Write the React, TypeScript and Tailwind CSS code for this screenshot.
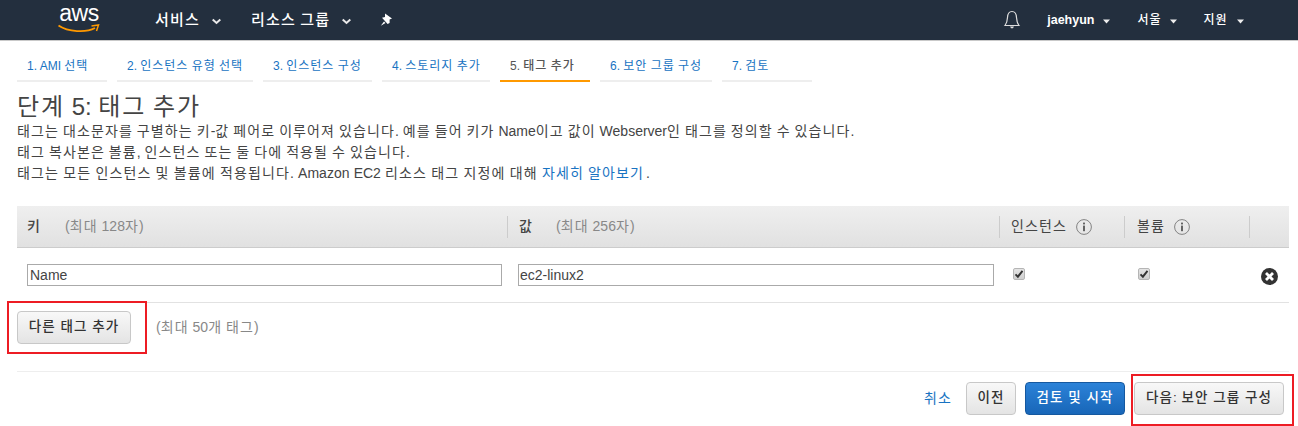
import React from "react";

const font = { fontFamily: '"Liberation Sans", "Noto Sans CJK KR", sans-serif' };

// The reference's Korean font sets every syllable on a full em; Noto's are narrower.
function T({ children }: { children: string }) {
  const runs = children.split(/([\uac00-\ud7a3]+)/);
  return (
    <span className="whitespace-pre-wrap">
      {runs.map((r, i) =>
        i % 2 === 1 ? (
          <span key={i} className="tracking-[0.08em]">
            {r}
          </span>
        ) : (
          <span key={i}>{r}</span>
        )
      )}
    </span>
  );
}

function Caret({ big = false }: { big?: boolean }) {
  if (big)
    return (
      <svg width="9" height="7" viewBox="0 0 9 7" className="ml-[12px] mt-[3px]">
        <path d="M.7 1.5 L4.5 5 L8.3 1.5" fill="none" stroke="#e8e8e8" strokeWidth="2" />
      </svg>
    );
  return (
    <svg width="7" height="5" viewBox="0 0 7 5" className="ml-[9px] mt-[2px]">
      <path d="M0 .5 H7 L3.5 4.5 Z" fill="#eee" />
    </svg>
  );
}

function Info() {
  return (
    <svg width="16" height="16" viewBox="0 0 16 16" className="ml-[9px]">
      <circle cx="8" cy="8" r="7.4" fill="none" stroke="#777" strokeWidth="0.9" />
      <rect x="7.1" y="6.6" width="1.8" height="5.6" fill="#555" />
      <rect x="7.1" y="3.6" width="1.8" height="1.8" fill="#555" />
    </svg>
  );
}

function Check() {
  return (
    <span className="mt-[-2px] flex h-[12px] w-[12px] items-center justify-center rounded-[2px] border border-[#b5b5b5] bg-gradient-to-b from-[#e4e4e4] to-[#cfcfcf]">
      <svg width="10" height="10" viewBox="0 0 10 10">
        <path d="M1.5 5.3 L3.9 7.7 L8.5 1.8" fill="none" stroke="#333" strokeWidth="1.9" />
      </svg>
    </span>
  );
}

const tabs = [
  ["1. AMI 선택", "w-[90px]"],
  ["2. 인스턴스 유형 선택", "w-[136px]"],
  ["3. 인스턴스 구성", "w-[109px]"],
  ["4. 스토리지 추가", "w-[108px]"],
  ["5. 태그 추가", "w-[90px]"],
  ["6. 보안 그룹 구성", "w-[112px]"],
  ["7. 검토", "w-[90px]"],
];

const grayBtn =
  "h-[33px] rounded-[4px] border border-[#c8c8c8] bg-gradient-to-b from-[#f8f8f8] to-[#e4e4e4] text-[13.5px] font-medium text-[#333] [word-spacing:1px]";

export default function App() {
  return (
    <div style={font} className="relative h-[426px] w-[1298px] overflow-hidden bg-white text-[14px] text-[#444]">
      <header className="flex h-[41px] items-center border-b border-[#c9c9c9] bg-[#232f3e] text-white">
        <div className="relative ml-[58px] flex h-[40px] w-[42px] flex-col items-center">
          <span className="mt-[1px] text-[23px] leading-[24px] tracking-[-0.5px] text-white">aws</span>
          <svg width="42" height="10" viewBox="0 0 42 10" className="mt-[-1px]">
            <path d="M0.5 1.5 C10 8 28 9 37 4" fill="none" stroke="#f90" strokeWidth="1.8" />
            <path d="M33.5 2 L40.5 1 L38.5 7" fill="none" stroke="#f90" strokeWidth="1.5" />
          </svg>
        </div>
        <div className="ml-[55px] flex items-center text-[15px] font-medium">
          <T>서비스</T>
          <Caret big />
        </div>
        <div className="ml-[30px] flex items-center text-[15px] font-medium">
          <T>리소스 그룹</T>
          <Caret big />
        </div>
        <svg width="13" height="14" viewBox="0 0 13 14" className="ml-[29px]">
          <path d="M5 .5 L12 5.5 L9.6 6.4 L9.6 10 L7.6 11 L2 4.8 L5 4 Z M4 8.5 L.8 12.8 L5.5 10 Z" fill="#fff" />
        </svg>
        <svg width="18" height="20" viewBox="0 0 18 20" className="ml-[610px]">
          <path
            d="M2 15.5 C4 13 4.3 11 4.5 7.5 C4.7 3.5 6.5 1.5 9 1.5 C11.5 1.5 13.3 3.5 13.5 7.5 C13.7 11 14 13 16 15.5 Z"
            fill="none"
            stroke="#ddd"
            strokeWidth="1.2"
          />
          <path d="M7 16.5 H11 L10 18.3 H8 Z" fill="#ddd" />
        </svg>
        <div className="ml-[26px] flex items-center text-[12.5px] font-bold">
          jaehyun
          <Caret />
        </div>
        <div className="ml-[27px] flex items-center text-[12px] font-medium">
          <T>서울</T>
          <Caret />
        </div>
        <div className="ml-[26px] flex items-center text-[12px] font-medium">
          <T>지원</T>
          <Caret />
        </div>
      </header>

      <main className="pl-[17px] pr-[9px]">
        <nav className="mt-[10px] flex gap-[10px]">
          {tabs.map(([t, w], i) => (
            <div
              key={t}
              className={`${w} h-[31px] whitespace-nowrap border-b-[2px] pl-[10px] pt-[7px] text-[12px] leading-[16px] ${
                i === 4 ? "border-[#f90] font-medium text-[#555]" : "border-[#eee] text-[#1873c2]"
              }`}
            >
              <T>{t}</T>
            </div>
          ))}
        </nav>

        <h1 className="mt-[11px] text-[24px] font-normal leading-[28px] text-[#444]">
          <T>단계 5: 태그 추가</T>
        </h1>
        <div className="text-[14px] leading-[21px]">
          <p>
            <T>태그는 대소문자를 구별하는 키-값 페어로 이루어져 있습니다. 예를 들어 키가 Name이고 값이 Webserver인 태그를 정의할 수 있습니다.</T>
          </p>
          <p>
            <T>태그 복사본은 볼륨, 인스턴스 또는 둘 다에 적용될 수 있습니다.</T>
          </p>
          <p className="[word-spacing:0.3px]">
            <T>태그는 모든 인스턴스 및 볼륨에 적용됩니다. Amazon EC2 리소스 태그 지정에 대해 </T>
            <span className="text-[#1873c2]">
              <T>자세히 알아보기</T>
            </span>
            <span className="ml-[2px]">.</span>
          </p>
        </div>

        <div className="mt-[22px] flex h-[42px] items-center border-b border-[#ccc] bg-gradient-to-b from-[#efefef] to-[#e1e1e1]">
          <div className="flex h-[22px] w-[491px] items-center border-r border-[#ccc] pl-[10px]">
            <b className="w-[38px] font-medium">
              <T>키</T>
            </b>
            <span className="text-[#888]">
              <T>(최대 128자)</T>
            </span>
          </div>
          <div className="flex h-[22px] w-[492px] items-center border-r border-[#ccc] pl-[11px]">
            <b className="w-[37px] font-medium">
              <T>값</T>
            </b>
            <span className="text-[#888]">
              <T>(최대 256자)</T>
            </span>
          </div>
          <div className="flex h-[22px] w-[125px] items-center border-r border-[#ccc] pl-[11px]">
            <T>인스턴스</T>
            <Info />
          </div>
          <div className="flex h-[22px] w-[125px] items-center border-r border-[#ccc] pl-[12px]">
            <T>볼륨</T>
            <Info />
          </div>
        </div>

        <div className="flex h-[55px] items-center border-b border-[#e2e2e2]">
          <div className="w-[491px] pl-[10px]">
            <div className="flex h-[22px] w-[475px] items-center border border-[#aaa] pl-[2px] text-[14px] text-[#444]">Name</div>
          </div>
          <div className="w-[492px] pl-[10px]">
            <div className="flex h-[22px] w-[476px] items-center border border-[#aaa] pl-[1px] text-[14px] text-[#444]">ec2-linux2</div>
          </div>
          <div className="w-[125px] pl-[13px]">
            <Check />
          </div>
          <div className="w-[125px] pl-[13px]">
            <Check />
          </div>
          <svg width="17" height="17" viewBox="0 0 17 17" className="ml-[11px] mt-[2px]">
            <circle cx="8.5" cy="8.5" r="8.5" fill="#333" />
            <path d="M5 5 L12 12 M12 5 L5 12" stroke="#fff" strokeWidth="2.8" />
          </svg>
        </div>

        <div className="mt-[8px] flex items-center">
          <button className={`${grayBtn} w-[114px]`}>
            <T>다른 태그 추가</T>
          </button>
          <span className="ml-[25px] text-[#888]">
            <T>(최대 50개 태그)</T>
          </span>
        </div>

        <div className="mt-[27px] flex items-center justify-end border-t border-[#eee] pr-[5px] pt-[10px]">
          <span className="mr-[14px] text-[#1873c2]">
            <T>취소</T>
          </span>
          <button className={`${grayBtn} w-[50px]`}>
            <T>이전</T>
          </button>
          <button className="ml-[9px] h-[33px] w-[100px] rounded-[4px] border border-[#15589f] bg-gradient-to-b from-[#2b82d8] to-[#1866b8] text-[13.5px] font-medium text-white [word-spacing:1px]">
            <T>검토 및 시작</T>
          </button>
          <button className={`${grayBtn} ml-[9px] w-[150px]`}>
            <T>다음: 보안 그룹 구성</T>
          </button>
        </div>
      </main>

      <div className="absolute left-[7px] top-[301px] h-[53px] w-[140px] border-2 border-[#ed1c24]" />
      <div className="absolute left-[1131px] top-[374px] h-[52px] w-[163px] border-2 border-[#ed1c24]" />
    </div>
  );
}
